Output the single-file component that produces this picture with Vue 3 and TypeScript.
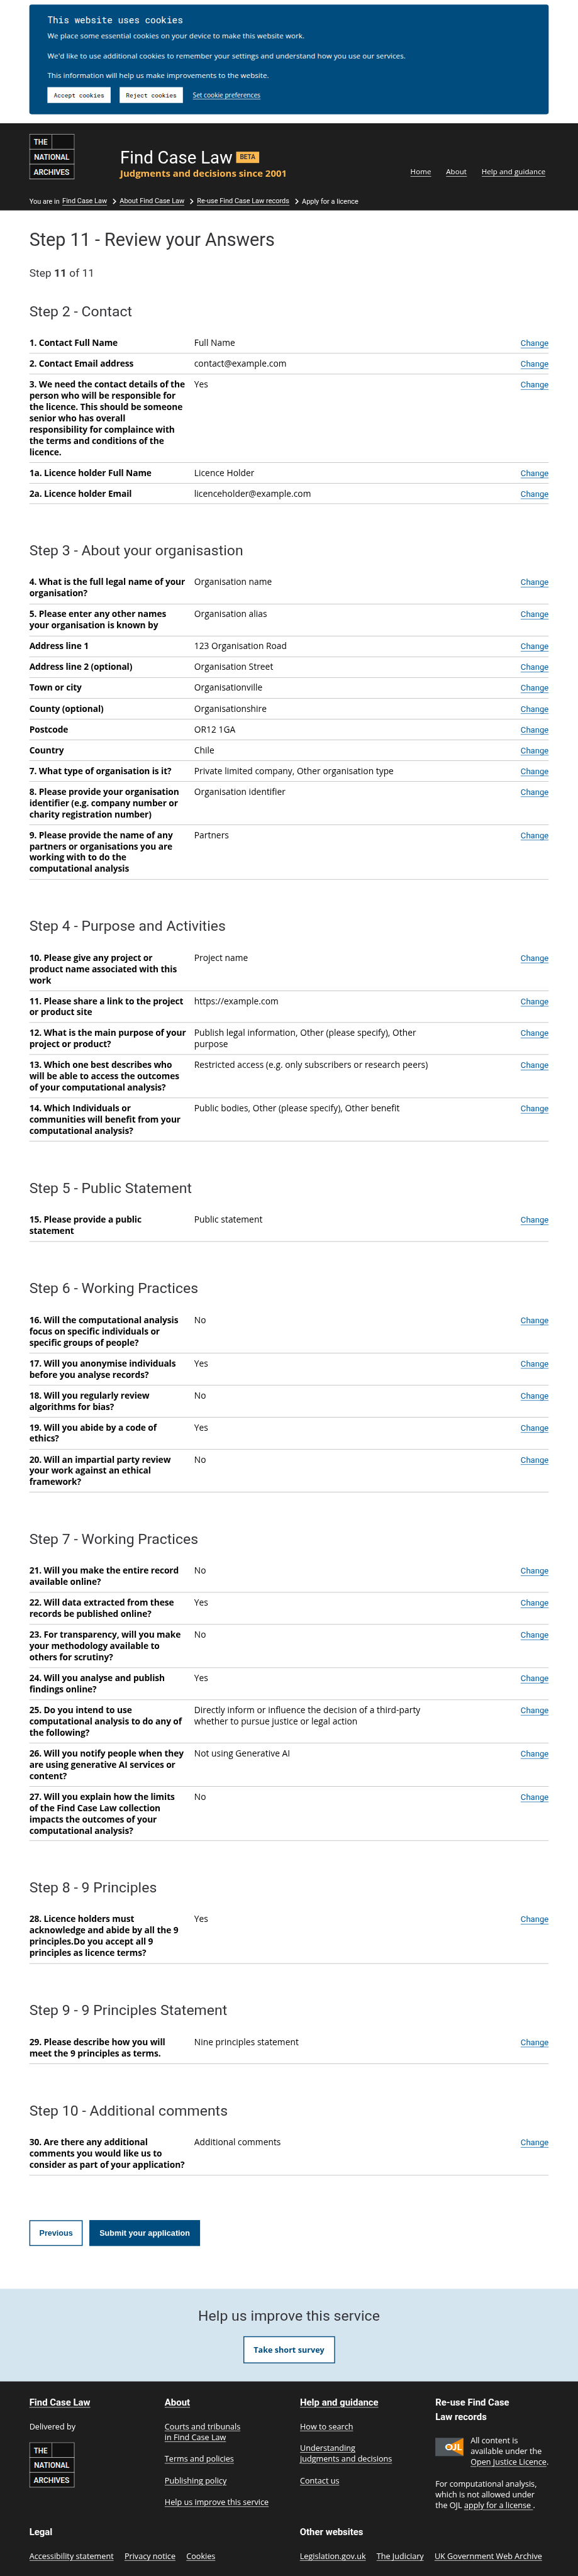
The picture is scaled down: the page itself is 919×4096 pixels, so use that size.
<script setup lang="ts">
import { h } from 'vue'

interface Row { q: string; a: string }
interface Section { title: string; rows: Row[] }

const r = (q: string, a: string): Row => ({ q, a })

const sections: Section[] = [
  { title: 'Step 2 - Contact', rows: [
    r('1. Contact Full Name', 'Full Name'),
    r('2. Contact Email address', 'contact@example.com'),
    r('3. We need the contact details of the\nperson who will be responsible for\nthe licence. This should be someone\nsenior who has overall\nresponsibility for complaince with\nthe terms and conditions of the\nlicence.', 'Yes'),
    r('1a. Licence holder Full Name', 'Licence Holder'),
    r('2a. Licence holder Email', 'licenceholder@example.com'),
  ] },
  { title: 'Step 3 - About your organisastion', rows: [
    r('4. What is the full legal name of your\norganisation?', 'Organisation name'),
    r('5. Please enter any other names\nyour organisation is known by', 'Organisation alias'),
    r('Address line 1', '123 Organisation Road'),
    r('Address line 2 (optional)', 'Organisation Street'),
    r('Town or city', 'Organisationville'),
    r('County (optional)', 'Organisationshire'),
    r('Postcode', 'OR12 1GA'),
    r('Country', 'Chile'),
    r('7. What type of organisation is it?', 'Private limited company, Other organisation type'),
    r('8. Please provide your organisation\nidentifier (e.g. company number or\ncharity registration number)', 'Organisation identifier'),
    r('9. Please provide the name of any\npartners or organisations you are\nworking with to do the\ncomputational analysis', 'Partners'),
  ] },
  { title: 'Step 4 - Purpose and Activities', rows: [
    r('10. Please give any project or\nproduct name associated with this\nwork', 'Project name'),
    r('11. Please share a link to the project\nor product site', 'https://example.com'),
    r('12. What is the main purpose of your\nproject or product?', 'Publish legal information, Other (please specify), Other\npurpose'),
    r('13. Which one best describes who\nwill be able to access the outcomes\nof your computational analysis?', 'Restricted access (e.g. only subscribers or research peers)'),
    r('14. Which Individuals or\ncommunities will benefit from your\ncomputational analysis?', 'Public bodies, Other (please specify), Other benefit'),
  ] },
  { title: 'Step 5 - Public Statement', rows: [
    r('15. Please provide a public\nstatement', 'Public statement'),
  ] },
  { title: 'Step 6 - Working Practices', rows: [
    r('16. Will the computational analysis\nfocus on specific individuals or\nspecific groups of people?', 'No'),
    r('17. Will you anonymise individuals\nbefore you analyse records?', 'Yes'),
    r('18. Will you regularly review\nalgorithms for bias?', 'No'),
    r('19. Will you abide by a code of\nethics?', 'Yes'),
    r('20. Will an impartial party review\nyour work against an ethical\nframework?', 'No'),
  ] },
  { title: 'Step 7 - Working Practices', rows: [
    r('21. Will you make the entire record\navailable online?', 'No'),
    r('22. Will data extracted from these\nrecords be published online?', 'Yes'),
    r('23. For transparency, will you make\nyour methodology available to\nothers for scrutiny?', 'No'),
    r('24. Will you analyse and publish\nfindings online?', 'Yes'),
    r('25. Do you intend to use\ncomputational analysis to do any of\nthe following?', 'Directly inform or influence the decision of a third-party\nwhether to pursue justice or legal action'),
    r('26. Will you notify people when they\nare using generative AI services or\ncontent?', 'Not using Generative AI'),
    r('27. Will you explain how the limits\nof the Find Case Law collection\nimpacts the outcomes of your\ncomputational analysis?', 'No'),
  ] },
  { title: 'Step 8 - 9 Principles', rows: [
    r('28. Licence holders must\nacknowledge and abide by all the 9\nprinciples.Do you accept all 9\nprinciples as licence terms?', 'Yes'),
  ] },
  { title: 'Step 9 - 9 Principles Statement', rows: [
    r('29. Please describe how you will\nmeet the 9 principles as terms.', 'Nine principles statement'),
  ] },
  { title: 'Step 10 - Additional comments', rows: [
    r('30. Are there any additional\ncomments you would like us to\nconsider as part of your application?', 'Additional comments'),
  ] },
]

const cookieLines: string[] = [
  'We place some essential cookies on your device to make this website work.',
  "We'd like to use additional cookies to remember your settings and understand how you use our services.",
  'This information will help us make improvements to the website.',
]
const crumbs: string[] = ['Find Case Law', 'About Find Case Law', 'Re-use Find Case Law records']
const legal: string[] = ['Accessibility statement', 'Privacy notice', 'Cookies']
const others: string[] = ['Legislation.gov.uk', 'The Judiciary', 'UK Government Web Archive']

const logoWord = (x: number, y: number, len: number, word: string) =>
  h('text', {
    x, y, textLength: len, lengthAdjust: 'spacingAndGlyphs', fill: '#fff',
    'font-family': 'Roboto, sans-serif', 'font-weight': 500, 'font-size': 18.7,
  }, word)

const ArchivesLogo = () =>
  h('svg', { width: 100, height: 100, viewBox: '0 0 100 100' }, [
    h('rect', { x: 0.5, y: 0.5, width: 99, height: 99, fill: '#111', stroke: '#fff' }),
    h('path', { d: 'M0 33.5H100M0 66.5H100', stroke: '#fff' }),
    h('path', { d: 'M50 1V33', stroke: '#aaa', 'stroke-width': 1.2 }),
    logoWord(10, 24, 30, 'THE'),
    logoWord(10.5, 57, 78, 'NATIONAL'),
    logoWord(9.5, 90, 79, 'ARCHIVES'),
  ])
</script>

<template>
  <div class="viewport">
  <div class="page">
    <section class="cookies">
      <h2>This website uses cookies</h2>
      <p v-for="line in cookieLines" :key="line">{{ line }}</p>
      <div class="cookie-actions">
        <button>Accept cookies</button>
        <button>Reject cookies</button>
        <a>Set cookie preferences</a>
      </div>
    </section>

    <header class="header">
      <div class="masthead">
        <ArchivesLogo />
        <div class="brand">
          <div class="brand-name"><span>Find Case Law</span><b>BETA</b></div>
          <div class="tagline">Judgments and decisions since 2001</div>
        </div>
        <nav class="nav"><a>Home</a><a>About</a><a>Help and guidance</a></nav>
      </div>
      <div class="crumbs">
        <span class="lead">You are in</span>
        <template v-for="c in crumbs" :key="c">
          <a>{{ c }}</a>
          <svg width="9" height="14" viewBox="0 0 9 14"><path d="M1.5 1.5 L7 7 L1.5 12.5" fill="none" stroke="#fff" stroke-width="2.2" /></svg>
        </template>
        <span>Apply for a licence</span>
      </div>
    </header>

    <main class="main">
      <h1>Step 11 - Review your Answers</h1>
      <p class="progress">Step <b>11</b> of 11</p>
      <section v-for="s in sections" :key="s.title" class="step">
        <h2>{{ s.title }}</h2>
        <dl>
          <div v-for="row in s.rows" :key="row.q" class="row">
            <dt>{{ row.q }}</dt>
            <dd>{{ row.a }}</dd>
            <dd class="action"><a>Change</a></dd>
          </div>
        </dl>
      </section>
      <div class="buttons">
        <button class="secondary">Previous</button>
        <button class="primary">Submit your application</button>
      </div>
    </main>

    <section class="survey">
      <h2>Help us improve this service</h2>
      <a>Take short survey</a>
    </section>

    <footer class="footer">
      <div class="cols">
        <div>
          <h3><a>Find Case Law</a></h3>
          <p>Delivered by</p>
          <ArchivesLogo />
        </div>
        <div>
          <h3><a>About</a></h3>
          <p><a>Courts and tribunals<br>in Find Case Law</a></p>
          <p><a>Terms and policies</a></p>
          <p><a>Publishing policy</a></p>
          <p><a>Help us improve this service</a></p>
        </div>
        <div>
          <h3><a>Help and guidance</a></h3>
          <p><a>How to search</a></p>
          <p><a>Understanding<br>judgments and decisions</a></p>
          <p><a>Contact us</a></p>
        </div>
        <div>
          <h3>Re-use Find Case<br>Law records</h3>
          <div class="ojl">
            <svg width="62" height="40" viewBox="0 0 62 40">
              <rect width="62" height="40" fill="#50575d" />
              <path d="M62 0.5 V39.5 L23 20 Z" fill="#f78b00" />
              <text x="21.5" y="27" font-family="Lato, sans-serif" font-weight="900" font-size="19.5" textLength="38" lengthAdjust="spacingAndGlyphs" fill="#fff">OJL</text>
            </svg>
            <p>All content is<br>available under the<br><a>Open Justice Licence</a>.</p>
          </div>
          <p>For computational analysis,<br>which is not allowed under<br>the OJL <a>apply for a license&nbsp;</a>.</p>
        </div>
      </div>
      <div class="bottom">
        <div><h3>Legal</h3><div class="links"><a v-for="l in legal" :key="l">{{ l }}</a></div></div>
        <div><h3>Other websites</h3><div class="links"><a v-for="l in others" :key="l">{{ l }}</a></div></div>
      </div>
    </footer>
  </div>
  </div>
</template>

<style>
html, body { margin: 0; background: #fff; }
</style>

<style scoped>
.viewport { width: 919px; height: 4096px; overflow: hidden; }
.page {
  transform: scale(0.71797);
  transform-origin: 0 0;
  width: 1280px;
  height: 5706px;
  display: flex;
  flex-direction: column;
  font-family: "Open Sans", "Noto Sans", sans-serif;
  font-size: 16px;
  color: #000;
}
* { box-sizing: border-box; }
h1, h2, h3, p, dl, dd { margin: 0; }
h1, h2 { font-family: Roboto, sans-serif; font-weight: 400; color: #343338; white-space: nowrap; }
button { margin: 0; white-space: nowrap; }

.cookies {
  margin: 10px 65px 20px;
  height: 243px;
  padding: 21px 40px 0;
  border-radius: 5px;
  background: #004c7e;
  color: #fff;
}
.cookies h2 { font-family: "Roboto Mono", "Liberation Mono", monospace; font-size: 20px; line-height: 27px; color: #fff; margin-bottom: 9px; }
.cookies p { font-size: 16px; letter-spacing: 0.14px; line-height: 24px; margin-bottom: 20px; white-space: nowrap; }
.cookies p:last-of-type { margin-bottom: 14px; }
.cookie-actions { display: flex; gap: 20px; align-items: center; }
.cookie-actions button {
  width: 140px; height: 35px; border: 0; padding: 0; background: #fff; color: #000;
  font-family: "Roboto Mono", "Liberation Mono", monospace; font-size: 13.333px;
}
.cookie-actions a { font-size: 14px; letter-spacing: 0.06px; margin-left: 2px; border-bottom: 1px solid #fff; line-height: 17px; }

.header { height: 193px; background: #1e1e1e; color: #fff; padding: 24px 65px 0; }
.masthead { display: flex; height: 100px; }
.brand { margin-left: 101px; padding-top: 30px; }
.brand-name { display: flex; align-items: center; font-family: Roboto, sans-serif; font-size: 38.4px; line-height: 44px; }
.brand-name b { margin-left: 8px; margin-top: -1px; background: #ffb84d; color: #343338; font-size: 14px; font-weight: 700; width: 51px; height: 25px; line-height: 25px; text-align: center; }
.tagline { color: #ffb84d; font-weight: 700; font-size: 20.8px; line-height: 26px; white-space: nowrap; }
.nav { margin-left: auto; margin-right: 7px; display: flex; gap: 33px; padding-top: 71px; letter-spacing: 0.14px; }
.nav a { height: 23px; line-height: 24px; border-bottom: 1px solid #fff; white-space: nowrap; }
.crumbs { display: flex; align-items: center; margin-top: 37px; height: 24px; font-size: 15.2px; white-space: nowrap; font-family: Roboto, sans-serif; letter-spacing: 0.04px; }
.crumbs .lead { margin-right: 6px; }
.crumbs a { border-bottom: 1px solid #fff; line-height: 17px; }
.crumbs svg { margin: 0 7px 0 12px; }

.main { padding: 41px 65px 0; height: 4603px; }
h1 { font-size: 40px; line-height: 48px; }
.progress { margin-top: 32px; font-family: Roboto, sans-serif; font-size: 24px; line-height: 36px; color: #343338; letter-spacing: 0.1px; }
.progress b { font-weight: 700; }
.step { margin-bottom: 84px; }
.step:first-of-type { padding-top: 47px; }
.step h2 { font-size: 32px; line-height: 38px; margin-bottom: 29px; letter-spacing: 0.05px; }
.row { display: grid; grid-template-columns: 365px 540px 1fr; padding: 10px 0; border-bottom: 1px solid #b1b4b6; font-size: 19.2px; line-height: 24.96px; }
dt, dd { white-space: pre-line; }
dt { font-weight: 700; letter-spacing: -0.14px; }
dd { letter-spacing: 0.06px; }
.action { text-align: right; }
.action a { display: inline-block; color: #005ea5; height: 23px; border-bottom: 1px solid #005ea5; font-family: Roboto, sans-serif; font-size: 18.3px; letter-spacing: 0; }
.buttons { display: flex; gap: 15px; padding-top: 15px; }
.buttons button { height: 57px; border: 2px solid #004c7e; padding: 0 20px; font-family: "Liberation Sans", Arial, sans-serif; font-weight: 700; font-size: 17.6px; }
.secondary { background: #fff; color: #004c7e; width: 118px; }
.primary { background: #004c7e; color: #fff; width: 245px; }

.survey { height: 205px; background: #d4e5ef; display: flex; flex-direction: column; align-items: center; padding-top: 39px; }
.survey h2 { font-size: 32px; line-height: 42px; letter-spacing: 0.08px; }
.survey a { margin-top: 24px; width: 203px; height: 60px; border: 2px solid #004c7e; background: #fff; color: #004c7e; font-weight: 700; font-size: 17.6px; line-height: 56px; text-align: center; }

.footer { flex: 1; background: #1e1e1e; color: #fff; padding: 32px 65px 0; }
.footer h3 { font-family: Roboto, sans-serif; font-weight: 700; font-size: 20.8px; line-height: 31px; margin-bottom: 24px; }
.footer a { text-decoration: underline; text-underline-offset: 3px; text-decoration-thickness: 1px; }
.footer p { line-height: 24px; margin-bottom: 24px; white-space: nowrap; font-size: 17.6px; }
.cols { display: grid; grid-template-columns: 299.7px 299.7px 299.7px 1fr; height: 287px; }
.ojl { display: flex; gap: 16px; margin-top: 1px; }
.ojl svg { flex: none; margin-top: 7px; }
.bottom { display: grid; grid-template-columns: 599px 1fr; }
.links { display: flex; gap: 24px; line-height: 24px; white-space: nowrap; font-size: 17.6px; }
</style>
